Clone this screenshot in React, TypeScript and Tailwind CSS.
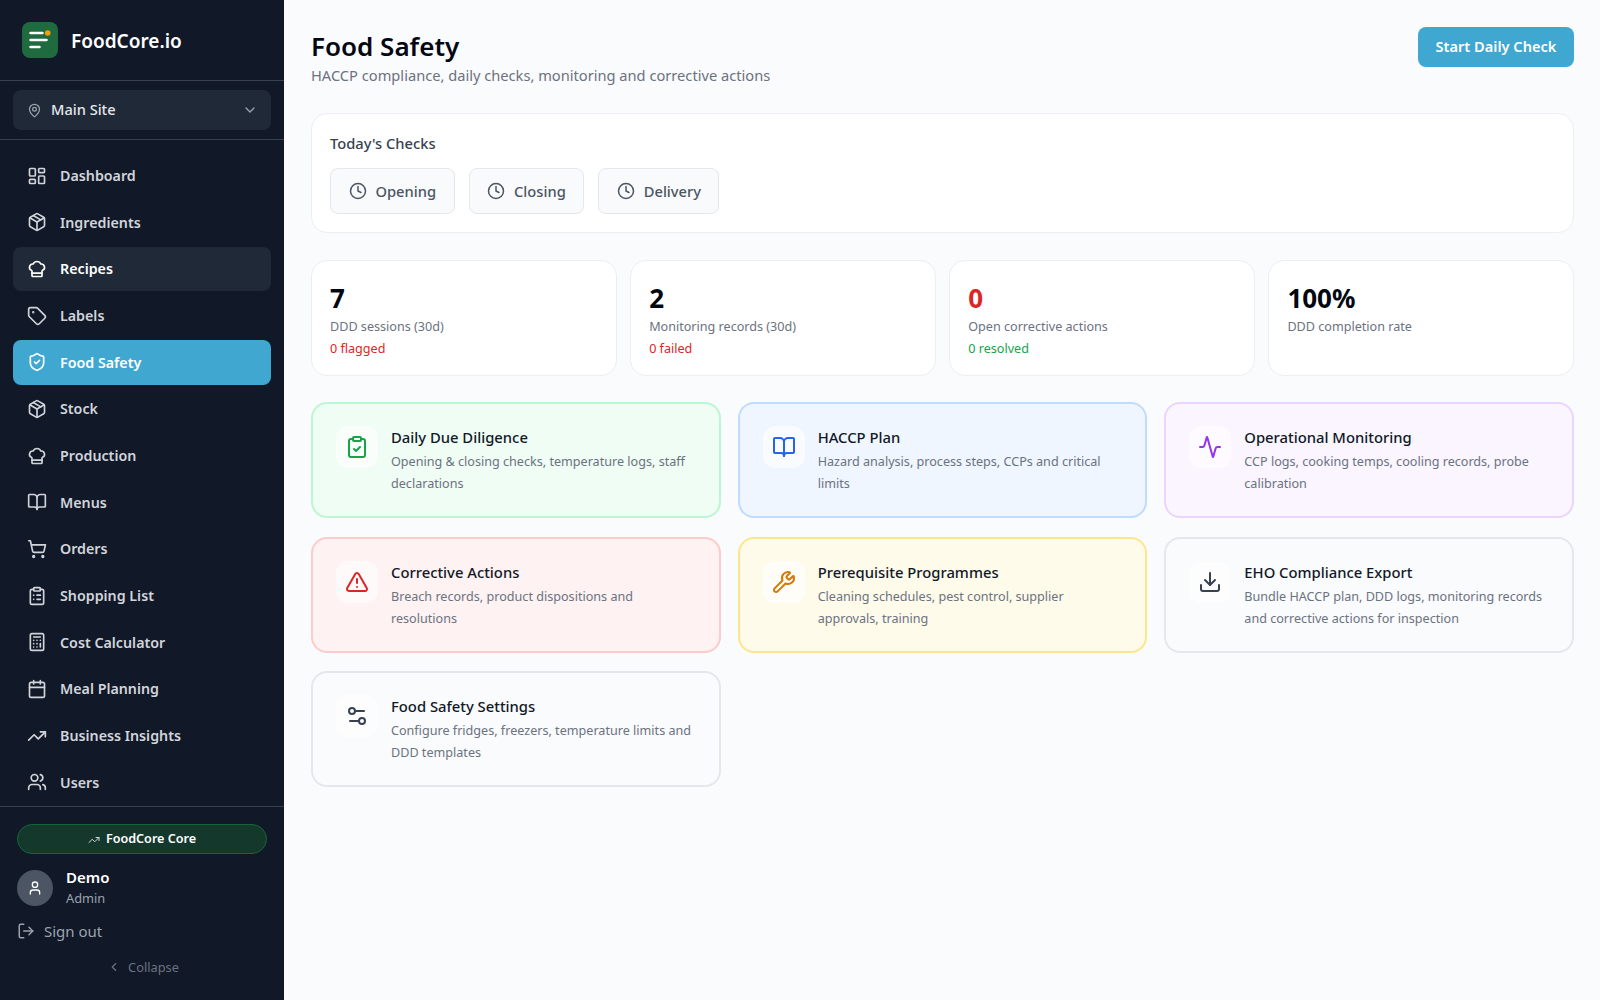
import {
  Activity,
  BookOpen,
  Calculator,
  Calendar,
  ChefHat,
  ChevronDown,
  ChevronLeft,
  ClipboardCheck,
  ClipboardList,
  Clock,
  Download,
  LayoutDashboard,
  LogOut,
  MapPin,
  Package,
  Settings2,
  ShieldCheck,
  ShoppingCart,
  Tag,
  TrendingUp,
  TriangleAlert,
  User,
  Users,
  Wrench,
} from 'lucide-react';

const navItems = [
  { label: 'Dashboard', icon: LayoutDashboard },
  { label: 'Ingredients', icon: Package },
  { label: 'Recipes', icon: ChefHat, hover: true },
  { label: 'Labels', icon: Tag },
  { label: 'Food Safety', icon: ShieldCheck, active: true },
  { label: 'Stock', icon: Package },
  { label: 'Production', icon: ChefHat },
  { label: 'Menus', icon: BookOpen },
  { label: 'Orders', icon: ShoppingCart },
  { label: 'Shopping List', icon: ClipboardList },
  { label: 'Cost Calculator', icon: Calculator },
  { label: 'Meal Planning', icon: Calendar },
  { label: 'Business Insights', icon: TrendingUp },
  { label: 'Users', icon: Users },
];

const stats = [
  { value: '7', label: 'DDD sessions (30d)', note: '0 flagged', noteClass: 'text-[#dc2626]', valueClass: 'text-[#030712]' },
  { value: '2', label: 'Monitoring records (30d)', note: '0 failed', noteClass: 'text-[#dc2626]', valueClass: 'text-[#030712]' },
  { value: '0', label: 'Open corrective actions', note: '0 resolved', noteClass: 'text-[#16a34a]', valueClass: 'text-[#dc2626]' },
  { value: '100%', label: 'DDD completion rate', valueClass: 'text-[#030712]' },
];

const modules = [
  {
    title: 'Daily Due Diligence',
    text: 'Opening & closing checks, temperature logs, staff declarations',
    icon: ClipboardCheck,
    card: 'border-[#bbf7d0] bg-[#f0fdf4]',
    iconClass: 'text-[#16a34a]',
  },
  {
    title: 'HACCP Plan',
    text: 'Hazard analysis, process steps, CCPs and critical limits',
    icon: BookOpen,
    card: 'border-[#bfdbfe] bg-[#eff6ff]',
    iconClass: 'text-[#2563eb]',
  },
  {
    title: 'Operational Monitoring',
    text: 'CCP logs, cooking temps, cooling records, probe calibration',
    icon: Activity,
    card: 'border-[#e9d5ff] bg-[#faf5ff]',
    iconClass: 'text-[#9333ea]',
  },
  {
    title: 'Corrective Actions',
    text: 'Breach records, product dispositions and resolutions',
    icon: TriangleAlert,
    card: 'border-[#fecaca] bg-[#fef2f2]',
    iconClass: 'text-[#dc2626]',
  },
  {
    title: 'Prerequisite Programmes',
    text: 'Cleaning schedules, pest control, supplier approvals, training',
    icon: Wrench,
    card: 'border-[#fde68a] bg-[#fffbeb]',
    iconClass: 'text-[#d97706]',
  },
  {
    title: 'EHO Compliance Export',
    text: 'Bundle HACCP plan, DDD logs, monitoring records and corrective actions for inspection',
    icon: Download,
    card: 'border-[#e5e7eb] bg-[#fafbfc]',
    iconClass: 'text-[#374151]',
  },
  {
    title: 'Food Safety Settings',
    text: 'Configure fridges, freezers, temperature limits and DDD templates',
    icon: Settings2,
    card: 'border-[#e5e7eb] bg-[#fafbfc]',
    iconClass: 'text-[#374151]',
  },
];

const Logo = () => (
  <svg className="rounded-lg" width="36" height="36" viewBox="0 0 36 36">
    <rect width="36" height="36" fill="#1f6b3f" />
    <path d="M8.5 11h12M8.5 18h16M8.5 25h9" stroke="white" strokeWidth="2.5" strokeLinecap="round" />
    <circle cx="25.7" cy="11" r="2.8" fill="#f59e0b" />
  </svg>
);

const Sidebar = () => (
  <aside className="flex h-screen w-[284px] shrink-0 flex-col bg-[#111827]">
    <div className="flex h-[81px] items-center gap-[13px] border-b border-[#374151] px-[22px]">
      <Logo />
      <span className="pt-[2px] text-[19px] font-semibold text-white">FoodCore.io</span>
    </div>
    <div className="border-b border-[#374151] px-[13px] py-[9px]">
      <div className="flex h-10 items-center gap-[9px] rounded-lg bg-[#1f2937] pr-[13px] pl-[14px] text-[#e5e7eb]">
        <MapPin className="h-[15px] w-[15px] text-[#9ca3af]" />
        <span className="flex-1 text-[14.6px] font-medium">Main Site</span>
        <ChevronDown className="h-4 w-4 text-[#9ca3af]" />
      </div>
    </div>
    <nav className="flex flex-col gap-[2px] px-[13px] pt-[13.4px]">
      {navItems.map(item => (
        <div
          key={item.label}
          className={`flex h-[44.67px] items-center gap-[13px] rounded-lg px-[14px] text-[14.25px] font-semibold ${
            item.active ? 'bg-[#3fa7d0] text-white' : item.hover ? 'bg-[#1f2937] text-white' : 'text-[#d1d5db]'
          }`}
        >
          <item.icon className="h-5 w-5 shrink-0" />
          {item.label}
        </div>
      ))}
    </nav>
    <div className="mt-[1.6px] flex flex-1 flex-col border-t border-[#374151] px-[17px] pt-[17px]">
      <div className="flex h-[30px] items-center justify-center gap-[6px] rounded-full border border-[#166534] bg-[#14392c] pt-[1px] text-[12.6px] font-semibold text-white">
        <TrendingUp className="h-3 w-3 text-[#d1d5db]" />
        FoodCore Core
      </div>
      <div className="mt-[13px] flex items-center gap-[13px]">
        <div className="flex h-9 w-9 items-center justify-center rounded-full bg-[#4b5563] text-white">
          <User className="h-4 w-4" />
        </div>
        <div>
          <p className="text-[15px] leading-[20px] font-semibold text-white">Demo</p>
          <p className="mt-[1px] text-[12.8px] leading-[20px] text-[#9ca3af]">Admin</p>
        </div>
      </div>
      <div className="mt-[11px] flex items-center gap-[9px] text-[15px] leading-[24px] text-[#9ca3af]">
        <LogOut className="h-[18px] w-[18px]" />
        Sign out
      </div>
      <div className="mt-[14px] flex items-center justify-center gap-[7px] pl-[2px] text-[12.8px] leading-[20px] text-[#6b7280]">
        <ChevronLeft className="h-3.5 w-3.5" />
        Collapse
      </div>
    </div>
  </aside>
);

export default function App() {
  return (
    <div className="flex h-screen overflow-hidden bg-[#fafbfc] font-['Noto_Sans','Open_Sans',sans-serif]">
      <Sidebar />
      <main className="flex-1 pt-[27px] pr-[26px] pl-[27px]">
        <div className="flex items-start justify-between">
          <div className="pt-[1px]">
            <h1 className="text-[26px] leading-[37px] font-semibold text-[#030712]">Food Safety</h1>
            <p className="text-[14.65px] leading-[21px] text-[#6b7280]">
              HACCP compliance, daily checks, monitoring and corrective actions
            </p>
          </div>
          <button className="flex h-10 w-[156px] items-center justify-center rounded-lg bg-[#3fa7d0] pb-[1px] text-[14.6px] font-semibold text-white">
            Start Daily Check
          </button>
        </div>

        <section className="mt-[27px] rounded-2xl border border-[#eceef1] bg-white px-[18px] pt-[18px] pb-[18px]">
          <p className="text-[14.7px] leading-[22px] font-medium text-[#374151]">Today's Checks</p>
          <div className="mt-[14px] flex gap-[14px]">
            {['Opening', 'Closing', 'Delivery'].map(name => (
              <button
                key={name}
                className="flex h-[46px] items-center gap-[9px] rounded-lg border border-[#e5e7eb] bg-[#f9fafb] px-[17.5px] text-[14.7px] font-medium text-[#4b5563]"
              >
                <Clock className="h-[18px] w-[18px]" />
                {name}
              </button>
            ))}
          </div>
        </section>

        <section className="mt-[27px] grid grid-cols-4 gap-[13.5px]">
          {stats.map(s => (
            <div key={s.label} className="h-[116px] rounded-2xl border border-[#eceef1] bg-white px-[18px] pt-[19px]">
              <p className={`text-[26px] leading-[37px] font-bold ${s.valueClass}`}>{s.value}</p>
              <p className="text-[12.6px] leading-[20px] text-[#6b7280]">{s.label}</p>
              {s.note && <p className={`mt-[2px] text-[12.6px] leading-[20px] ${s.noteClass}`}>{s.note}</p>}
            </div>
          ))}
        </section>

        <section className="mt-[26px] grid grid-cols-3 gap-x-[17px] gap-y-[18.5px]">
          {modules.map(m => (
            <div key={m.title} className={`flex h-[116px] items-start gap-[13px] rounded-2xl border-2 pt-[22px] pr-[22px] pl-[23px] ${m.card}`}>
              <div className="flex h-[42px] w-[42px] shrink-0 items-center justify-center rounded-xl bg-white/60">
                <m.icon className={`h-[24px] w-[24px] ${m.iconClass}`} />
              </div>
              <div>
                <p className="mb-[3px] text-[14.8px] leading-[22px] font-medium text-[#111827]">{m.title}</p>
                <p className="text-[12.6px] leading-[22px] text-[#6b7280]">{m.text}</p>
              </div>
            </div>
          ))}
        </section>
      </main>
    </div>
  );
}
